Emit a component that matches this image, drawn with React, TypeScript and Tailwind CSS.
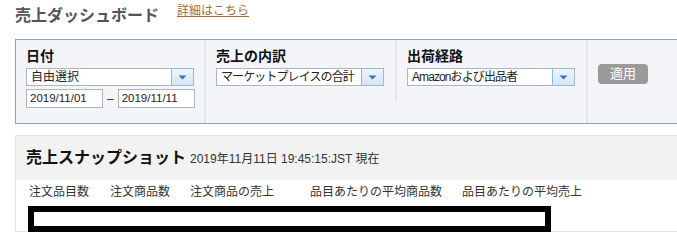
import React from 'react';

const Arrow = () => (
  <svg width="9" height="5" viewBox="0 0 9 5">
    <path d="M0.5 0.5h8L4.5 4.5z" fill="#3b72b0" />
  </svg>
);

const Select = ({ value, tight }: { value: string; tight?: boolean }) => (
  <div className="flex h-[18px] w-[168px] border border-[#abb6c2] bg-white">
    <div
      className={`flex-1 overflow-hidden whitespace-nowrap pl-[4px] text-[12px] leading-[16px] text-[#222] ${
        tight ? 'tracking-[-0.9px]' : ''
      }`}
    >
      {value}
    </div>
    <div className="flex w-[22px] items-center justify-center border-l border-[#8ebbe6] bg-gradient-to-b from-[#edf5fd] to-[#d3e5f7]">
      <Arrow />
    </div>
  </div>
);

const DateBox = ({ value }: { value: string }) => (
  <div className="h-[19px] w-[77px] border border-[#abb6c2] bg-white pl-[3px] text-[11.5px] leading-[17px] text-[#222]">
    {value}
  </div>
);

const Label = ({ children }: { children: React.ReactNode }) => (
  <div className="text-[14px] font-bold leading-[20px] text-[#111]">{children}</div>
);

const columns = [
  { label: '注文品目数', w: 'w-[81px]' },
  { label: '注文商品数', w: 'w-[80px]' },
  { label: '注文商品の売上', w: 'w-[120px]' },
  { label: '品目あたりの平均商品数', w: 'w-[152px]' },
  { label: '品目あたりの平均売上', w: 'w-auto' },
];

export default function App() {
  return (
    <div className="relative h-[238px] w-[677px] overflow-hidden bg-white font-['Liberation_Sans','Noto_Sans_CJK_JP',sans-serif]">
      {/* Page title */}
      <div className="flex items-start pl-[15px]">
        <h1 className="mt-[6px] text-[16px] font-bold leading-[20px] text-[#555]">売上ダッシュボード</h1>
        <a className="ml-[18px] mt-[3px] text-[12px] leading-[16px] text-[#a06d36] underline">詳細はこちら</a>
      </div>

      {/* Filter panel */}
      <div className="ml-[15px] mt-[13px] flex h-[85px] w-[680px] border border-[#88a3bd] bg-[#f3f5f9]">
        <div className="w-[190px] border-r-2 border-[#e4e7ec] pl-[10px] pt-[6px]">
          <Label>日付</Label>
          <div className="mt-[2px]">
            <Select value="自由選択" />
          </div>
          <div className="mt-[3px] flex items-center">
            <DateBox value="2019/11/01" />
            <span className="mx-[4px] text-[12px] text-[#333]">–</span>
            <DateBox value="2019/11/11" />
          </div>
        </div>
        <div className="h-[61px] w-[191px] self-start border-r-2 border-[#e4e7ec] pl-[10px] pt-[6px]">
          <Label>売上の内訳</Label>
          <div className="mt-[2px]">
            <Select value="マーケットプレイスの合計" tight />
          </div>
        </div>
        <div className="w-[191px] border-r-2 border-[#e4e7ec] pl-[10px] pt-[6px]">
          <Label>出荷経路</Label>
          <div className="mt-[2px]">
            <Select value="Amazonおよび出品者" tight />
          </div>
        </div>
        <div className="flex-1 pl-[10px] pt-[21px]">
          <button className="h-[20px] w-[50px] rounded-[4px] bg-[#9a9a9a] text-[13px] leading-[20px] text-white">
            適用
          </button>
        </div>
      </div>

      {/* Snapshot card */}
      <div className="ml-[15px] mt-[11px] h-[97px] w-[680px] border-b border-l border-t border-[#e6e6e6]">
        <div className="flex h-[44px] items-baseline bg-[#f2f2f2] pl-[10px] pt-[11px]">
          <span className="text-[16px] font-bold leading-[22px] text-[#111]">売上スナップショット</span>
          <span className="ml-[4px] text-[12px] text-[#333]">2019年11月11日 19:45:15:JST 現在</span>
        </div>
        <div className="flex pl-[13px] pt-[4px] text-[12px] leading-[16px] text-[#333]">
          {columns.map((c) => (
            <div key={c.label} className={`${c.w} whitespace-nowrap`}>
              {c.label}
            </div>
          ))}
        </div>
      </div>

      {/* Redaction box */}
      <div className="absolute left-[28px] top-[206px] h-[26px] w-[523px] border-[6px] border-black bg-white" />
    </div>
  );
}
